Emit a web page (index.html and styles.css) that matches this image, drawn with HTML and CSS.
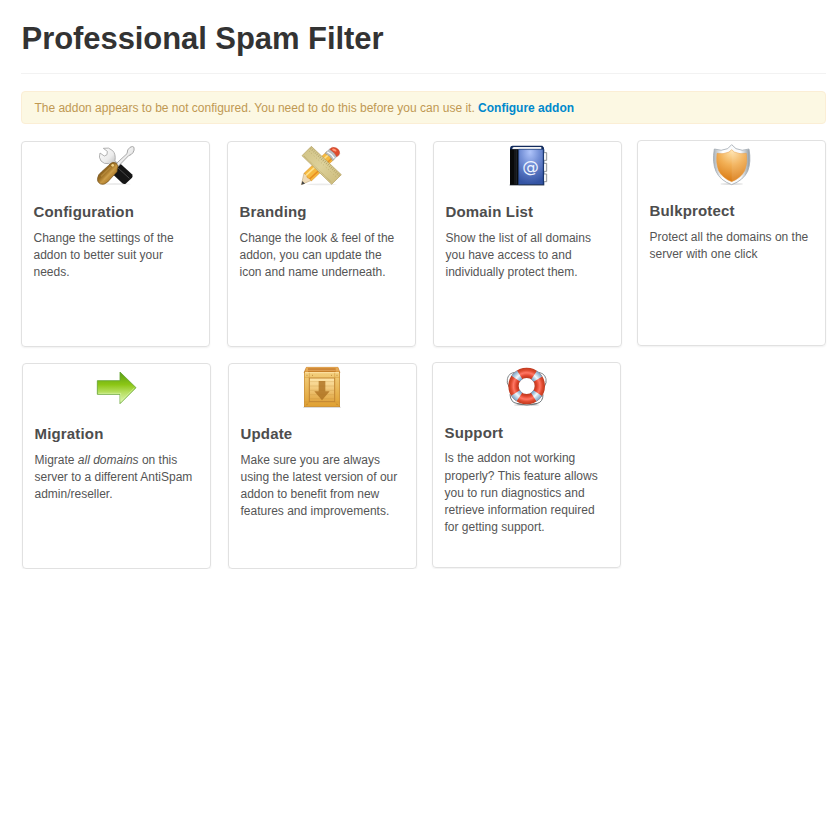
FILE: index.html
```
<!DOCTYPE html>
<html lang="en">
<head>
<meta charset="utf-8">
<title>Professional Spam Filter</title>
<link rel="stylesheet" href="styles.css">
</head>
<body>
<main class="page">
<header class="page-header"><h1>Professional Spam Filter</h1></header>
<div class="alert">The addon appears to be not configured. You need to do this before you can use it. <a href="#">Configure addon</a></div>

<section class="row">
<article class="card">
<svg class="icon" viewBox="0 12 156 144">
<defs>
<linearGradient id="wood" x1="0" y1="0" x2="1" y2="1"><stop offset="0" stop-color="#6d4910"/><stop offset=".42" stop-color="#9a6d22"/><stop offset=".55" stop-color="#c99a45"/><stop offset=".75" stop-color="#a97624"/><stop offset="1" stop-color="#70480e"/></linearGradient>
<linearGradient id="steel" x1="0" y1="0" x2="1" y2="1"><stop offset="0" stop-color="#fff"/><stop offset=".55" stop-color="#ebebeb"/><stop offset="1" stop-color="#b0b0b0"/></linearGradient>
</defs>
<ellipse cx="76" cy="138" rx="46" ry="2.5" fill="#000" opacity=".1"/>
<path d="M70 90 88 74 126 109Q130 114 126 119L107 137Q102 140 97 136L65 106Z" fill="#151515"/>
<path d="M82 88 118 121" stroke="#4a4a4a" stroke-width="3"/>
<path d="M72 83 111 47Q111 34 120 28Q128 23 132 28Q134 37 129 44Q124 51 116 53L79 91Z" fill="url(#steel)" stroke="#999" stroke-width="2.5"/>
<path d="M40 31 52 40 51 50 43 54 30 45Q25 58 33 69Q42 79 56 77L64 84 82 76 75 68Q78 48 68 38Q57 26 40 31Z" fill="url(#steel)" stroke="#a4a4a4" stroke-width="2.5"/>
<path d="M60 78Q67 70 78 75Q88 84 82 93L81 101 53 132Q42 142 32 138Q20 132 23 119Q25 109 34 102L55 83Z" fill="url(#wood)" stroke="#70501c" stroke-width="2"/>
<path d="M33 115 62 87" stroke="#c79c4c" stroke-width="5" opacity=".55"/>
<path d="M42 125 72 95" stroke="#cda250" stroke-width="5" opacity=".5"/>
<circle cx="68" cy="82" r="4" fill="#efd38a"/>
</svg>
<h2>Configuration</h2><p>Change the settings of the<br>addon to better suit your<br>needs.</p>
</article>

<article class="card">
<svg class="icon" viewBox="0 12 156 144">
<defs><linearGradient id="ruler" x1="0" y1="0" x2="1" y2="1"><stop offset="0" stop-color="#d0c285"/><stop offset=".5" stop-color="#ddd19a"/><stop offset="1" stop-color="#cbb978"/></linearGradient></defs>
<ellipse cx="77" cy="139" rx="46" ry="2.5" fill="#000" opacity=".08"/>
<path d="M16 140 24 105 46 127Z" fill="#eedab6" stroke="#b79a69" stroke-width="1.5"/>
<path d="M16 140 19 129 27 137Z" fill="#444"/>
<path d="M24 106 92 41 116 62 46 129Q42 120 34 119Q33 110 24 106Z" fill="#f6b93f" stroke="#d48a20" stroke-width="1.5"/>
<path d="M30 112 103 45" stroke="#ffe18a" stroke-width="5"/>
<path d="M41 123 112 57" stroke="#e98d1e" stroke-width="5"/>
<path d="M87 46 101 33Q115 41 123 55L110 68Q104 53 87 46Z" fill="#b8bec3" stroke="#8d9297" stroke-width="1.5"/>
<path d="M94 42Q108 48 115 61" fill="none" stroke="#fff" stroke-width="4"/>
<path d="M101 34Q108 24 121 30Q132 36 131 46Q130 54 122 56Q116 43 101 34Z" fill="#df4a2b" stroke="#bd5138" stroke-width="1.5"/>
<ellipse cx="115" cy="36" rx="7" ry="3.5" fill="#ff9877" transform="rotate(25 115 36)"/>
<path d="M18 53 46 25 136 110 107 139Z" fill="url(#ruler)" stroke="#b09c5b" stroke-width="2"/>
<path d="M24 54 107 133" stroke="#a59150" stroke-width="1.5" stroke-dasharray="3 2"/>
<path d="M44 31 130 112" stroke="#91804b" stroke-width="7" stroke-dasharray="1.5 5" opacity=".7"/>
<path d="M39 39 124 120" stroke="#b4a466" stroke-width="3" stroke-dasharray="2 8"/>
</svg>
<h2>Branding</h2><p>Change the look &amp; feel of the<br>addon, you can update the<br>icon and name underneath.</p>
</article>

<article class="card">
<svg class="icon" viewBox="0 12 156 144">
<defs><radialGradient id="book" cx=".45" cy=".08" r=".9"><stop offset="0" stop-color="#afc4fa"/><stop offset=".42" stop-color="#738fd6"/><stop offset="1" stop-color="#3454a4"/></radialGradient></defs>
<path d="M24 140V33Q24 23 32 23H121L126 29V140Z" fill="#122b5d"/>
<path d="M31 32Q31 27 36 27H118V34H31Z" fill="#f1f3f6"/>
<path d="M24 34H50V141H24Z" fill="#080909"/>
<path d="M39 34V139M44 34V139" stroke="#3c4650" stroke-width="1.5"/>
<path d="M50 34H126V140H50Z" fill="url(#book)" stroke="#244581" stroke-width="2"/>
<path d="M124 34V139" stroke="#123068" stroke-width="3"/>
<path d="M126 44H134V67H126M126 76H134V100H126M126 108H134V131H126" fill="#f6f6f6" stroke="#909396" stroke-width="3"/>
<path d="M23 141H127" stroke="#171e2b" stroke-width="2"/>
<text class="at-sign" x="61" y="102">@</text>
</svg>
<h2>Domain List</h2><p>Show the list of all domains<br>you have access to and<br>individually protect them.</p>
</article>

<article class="card card-raised">
<svg class="icon" viewBox="0 9 156 144">
<defs>
<radialGradient id="shield" cx=".5" cy=".05" r=".95"><stop offset="0" stop-color="#ffe3ad"/><stop offset=".45" stop-color="#f2b056"/><stop offset="1" stop-color="#d97a14"/></radialGradient>
<linearGradient id="rim"><stop offset="0" stop-color="#a9b1b7"/><stop offset=".25" stop-color="#fff"/><stop offset=".75" stop-color="#f6f8fa"/><stop offset="1" stop-color="#8d989f"/></linearGradient>
</defs>
<ellipse cx="77" cy="138" rx="34" ry="3" fill="#000" opacity=".12"/>
<path d="M77 20 90 32Q108 41 129 33Q136 72 125 100Q112 127 77 140Q42 127 30 100Q18 73 25 33Q46 41 65 32Z" fill="url(#rim)" stroke="#a1aab2" stroke-width="2.5"/>
<path d="M77 35 85 42Q101 50 121 46Q126 75 116 98Q105 120 77 131Q49 120 38 98Q29 75 33 46Q52 50 69 42Z" fill="url(#shield)" stroke="#e69a43" stroke-width="1.5"/>
<path d="M77 36 85 42Q101 50 121 46Q126 75 116 98Q105 120 77 130Z" fill="#fff" opacity=".09"/>
</svg>
<h2>Bulkprotect</h2><p>Protect all the domains on the<br>server with one click</p>
</article>
</section>

<section class="row row-second">
<article class="card">
<svg class="icon" viewBox="3 12 156 144">
<defs><linearGradient id="arrow" x1="0" y1="0" x2="0" y2="1"><stop offset="0" stop-color="#599e16"/><stop offset=".4" stop-color="#8cc615"/><stop offset=".63" stop-color="#b5de5d"/><stop offset="1" stop-color="#e0f7ba"/></linearGradient></defs>
<path d="M22 62H90V36L138 83 90 131V103H22Z" fill="url(#arrow)" stroke="#65a434" stroke-width="2.5"/>
<path d="M25 100H92V125L133 84" fill="none" stroke="#dcfca8" stroke-width="2"/>
</svg>
<h2>Migration</h2><p>Migrate <em>all domains</em> on this<br>server to a different AntiSpam<br>admin/reseller.</p>
</article>

<article class="card">
<svg class="icon" viewBox="3 12 156 144">
<defs><linearGradient id="crate" x1="0" y1="0" x2="0" y2="1"><stop offset="0" stop-color="#f3cf7d"/><stop offset="1" stop-color="#dfa032"/></linearGradient><linearGradient id="panel" x1="0" y1="0" x2="0" y2="1"><stop offset="0" stop-color="#ffe7ac"/><stop offset="1" stop-color="#e0a43f"/></linearGradient></defs>
<path d="M22 142H134" stroke="#aaa" stroke-width="3" opacity=".5"/>
<path d="M31 22H126L132 38H24Z" fill="#c98132" stroke="#b87528" stroke-width="1.5"/>
<path d="M31 22 27 37 36 37V25H119V37H130L126 22Z" fill="#e7aa53"/>
<path d="M36 31H119" stroke="#e0a45a" stroke-width="3"/>
<rect x="25" y="36" width="106" height="104" fill="url(#crate)" stroke="#c4811e" stroke-width="2"/>
<path d="M27 38H129" stroke="#ffe7ab" stroke-width="3"/>
<rect x="40" y="54" width="76" height="71" fill="url(#panel)" stroke="#c18533" stroke-width="3"/>
<path d="M42 65H114M42 78H114M42 91H114M42 104H114M42 116H114" stroke="#c99743" stroke-width="1.5" opacity=".65"/>
<path d="M25 52H39M117 52H131M40 38V53M116 38V53M25 126H40L28 139M116 126H130M117 127 129 139" fill="none" stroke="#d09435" stroke-width="1.5"/>
<path d="M68 63H88V94H101L78 121 55 94H68Z" fill="#ac7020" opacity=".8"/>
<path d="M32 46H34M122 46H124M32 133H34M122 133H124M49 46H51M106 46H108" stroke="#a97327" stroke-width="3"/>
</svg>
<h2>Update</h2><p>Make sure you are always<br>using the latest version of our<br>addon to benefit from new<br>features and improvements.</p>
</article>

<article class="card card-raised card-support">
<svg class="icon" viewBox="3 9 156 144">
<defs><radialGradient id="buoy" gradientUnits="userSpaceOnUse" cx="80" cy="78" r="56"><stop offset=".43" stop-color="#b83b22"/><stop offset=".55" stop-color="#df432b"/><stop offset=".71" stop-color="#ff7865"/><stop offset=".84" stop-color="#e04b30"/><stop offset="1" stop-color="#b9371c"/></radialGradient>
<radialGradient id="band" gradientUnits="userSpaceOnUse" cx="80" cy="78" r="56"><stop offset=".45" stop-color="#75a5cb"/><stop offset=".69" stop-color="#f2f9fd"/><stop offset="1" stop-color="#6d9bc0"/></radialGradient></defs>
<ellipse cx="80" cy="135" rx="38" ry="3" fill="#000" opacity=".15"/>
<path d="M43 37Q19 42 22 68L28 82M116 37Q141 42 138 68L132 82M30 103Q32 128 50 130L67 134M129 103Q129 126 112 130L94 134M50 131Q80 139 112 131" fill="none" stroke="#70777a" stroke-width="3"/>
<path d="M43 38Q22 44 23 64M116 38Q138 44 137 64" fill="none" stroke="#e7e9e9" stroke-width="1.2"/>
<circle cx="80" cy="78" r="39.5" fill="none" stroke="url(#buoy)" stroke-width="31"/>
<circle class="bands" cx="80" cy="78" r="39.5" stroke="url(#band)" pathLength="360"/>
</svg>
<h2>Support</h2><p>Is the addon not working<br>properly? This feature allows<br>you to run diagnostics and<br>retrieve information required<br>for getting support.</p>
</article>
</section>
</main>
</body>
</html>
```
FILE: styles.css
```
* { box-sizing: border-box; }
body { margin: 0; background: #fff; color: #555; font: 12px/17.14px "Liberation Sans", Arial, sans-serif; }
.page { width: 840px; padding: 21px 14px 0 21px; }
.page-header { height: 53px; margin-bottom: 17px; border-bottom: 1px solid #f2f2f2; }
h1 { margin: 0; padding-left: .6px; font-size: 31px; line-height: 35px; letter-spacing: -.07px; color: #333; }
.alert { height: 33px; margin-bottom: 17px; padding: 8px 12.4px; border: 1px solid #fbeed5; border-radius: 4px; background: #fcf8e3; color: #c09853; }
.alert a { color: #0088cc; font-weight: bold; text-decoration: none; }
.row { display: flex; align-items: flex-start; gap: 17px; height: 206px; }
.row-second { margin-top: 16px; padding-left: 1px; }
.card { flex: none; width: 189px; height: 206px; border: 1px solid #e1e1e1; border-radius: 4px; box-shadow: 0 1px 2px rgba(0, 0, 0, .06); }
.card-raised { margin: -1px 0 0 -2px; }
.icon { display: block; width: 52px; height: 48px; margin-left: 68px; }
.card h2 { margin: 13px 11.5px 0; font-size: 15px; line-height: 17px; letter-spacing: .17px; color: #4d4d4d; }
.card p { margin: 10px 11.5px 0; white-space: nowrap; }
.card-support p { margin-top: 9.4px; }
.at-sign { font: 50px "DejaVu Sans", sans-serif; fill: #edf3ff; }
.bands { fill: none; stroke-width: 31; stroke-dasharray: 24 66; stroke-dashoffset: -33; }
```
